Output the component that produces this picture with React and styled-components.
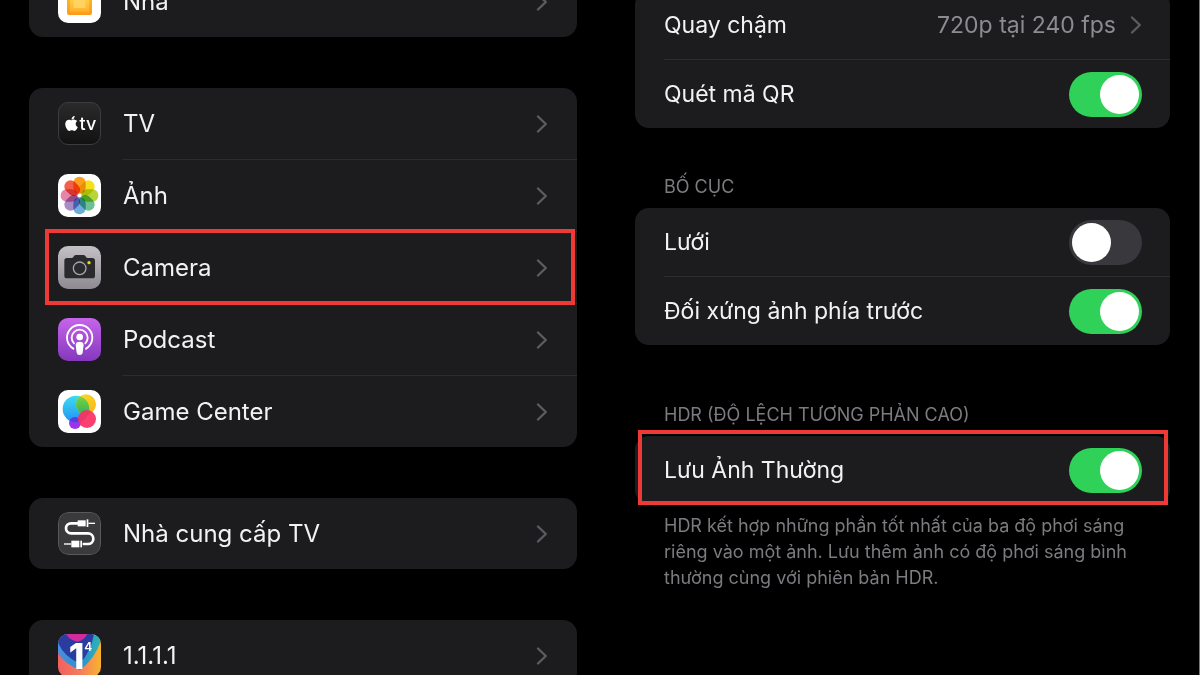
import React, { useState } from "react";
import styled, { createGlobalStyle, css } from "styled-components";
import { FaApple } from "react-icons/fa";

const GlobalStyle = createGlobalStyle`
  * {
    box-sizing: border-box;
  }
  body {
    margin: 0;
    background: #000;
    color: #f2f2f4;
    font-family: Inter, "Noto Sans", sans-serif;
  }
`;

const Page = styled.main`
  display: grid;
  grid-template-columns: 1fr 1fr;
  height: 100vh;
  overflow: hidden;
`;

const Screen = styled.section`
  overflow: hidden;
  ${({ $side }) =>
    $side === "left"
      ? css`
          padding: 0 23px 0 29px;
        `
      : css`
          padding: 0 29px 0 35px;
          border-right: 1px solid #77777a;
        `}
`;

// the list is scrolled, so the first row is cut by the top of the screen
const Scrolled = styled.div`
  margin-top: ${({ $by }) => -$by}px;
`;

const Group = styled.ul`
  list-style: none;
  margin: 0;
  padding: 0;
  border-radius: 14px;
  background: #1c1c1f;
`;

const AppGroup = styled(Group)`
  margin-bottom: 51px;
`;

const Item = styled.li`
  position: relative;
  & + &::before {
    content: "";
    display: block;
    height: 1px;
    margin-left: ${({ $inset }) => $inset}px;
    background: #2d2d30;
  }
`;

const rowStyle = css`
  display: flex;
  align-items: center;
  color: inherit;
  line-height: 32px;
  text-decoration: none;
`;

const AppRow = styled.a`
  ${rowStyle}
  height: 71px;
  padding: 0 29px;
  gap: 22px;
  font-size: 24px;
`;

const settingStyle = css`
  ${rowStyle}
  height: 68px;
  padding: 0 28px 0 29px;
  gap: 14px;
  font-size: 23px;
`;

const SettingLink = styled.a`
  ${settingStyle}
`;

const SettingLabel = styled.label`
  ${settingStyle}
`;

const Name = styled.span`
  flex: 1;
`;

const Value = styled.span`
  color: #8b8b90;
`;

const Highlight = styled.span`
  position: absolute;
  z-index: 1;
  inset: ${({ $inset }) => $inset};
  border: 4px solid #ee3a37;
  pointer-events: none;
`;

const Switch = styled.input`
  appearance: none;
  display: flex;
  align-items: center;
  width: 73px;
  height: 45px;
  margin: 0;
  padding: 0 3px;
  border-radius: 23px;
  background: #39393d;
  &::before {
    content: "";
    width: 39px;
    height: 39px;
    border-radius: 50%;
    background: #fff;
  }
  &:checked {
    justify-content: flex-end;
    background: #30d158;
  }
`;

const SectionTitle = styled.h2`
  margin: 0;
  padding: ${({ $top }) => $top}px 29px 9px;
  color: #7b7b80;
  font-size: 18px;
  font-weight: 400;
  line-height: 24px;
  text-transform: uppercase;
`;

const Note = styled.p`
  margin: 0;
  padding: 9px 29px;
  color: #7b7b80;
  font-size: 18px;
  line-height: 26px;
`;

const Tile = styled.svg`
  display: block;
  flex: none;
  width: 43px;
  height: 43px;
  border-radius: 10px;
`;

const TvTile = styled.span`
  display: flex;
  flex: none;
  align-items: center;
  justify-content: center;
  width: 43px;
  height: 43px;
  border: 1px solid #3c3c3e;
  border-radius: 10px;
  background: linear-gradient(#2a2a2b, #121213);
  color: #fff;
  font-size: 18px;
  font-weight: 500;
  line-height: 20px;
`;

const ChevronIcon = styled.svg`
  flex: none;
  width: 12px;
  height: 20px;
`;

const Chevron = () => (
  <ChevronIcon viewBox="0 0 12 20" fill="none" aria-hidden="true">
    <path
      d="M2 2.5 9.8 10 2 17.5"
      stroke="#5c5c60"
      strokeWidth="2.4"
      strokeLinecap="round"
      strokeLinejoin="round"
    />
  </ChevronIcon>
);

const HomeIcon = () => (
  <Tile viewBox="0 0 129 129" aria-hidden="true">
    <defs>
      <linearGradient id="home" x1="0" y1="0" x2="0" y2="1">
        <stop offset="0" stopColor="#ffc933" />
        <stop offset="1" stopColor="#fd9a1c" />
      </linearGradient>
      <linearGradient id="homeInner" x1="0" y1="0" x2="0" y2="1">
        <stop offset="0" stopColor="#ffd04a" />
        <stop offset="1" stopColor="#ffb12b" />
      </linearGradient>
    </defs>
    <rect width="129" height="129" fill="#fff" />
    <path
      d="M64 18 110 60H102V99Q102 105 96 105H33Q27 105 27 99V60H18Z"
      fill="url(#home)"
    />
    <path d="M36 54H93V95H36Z" fill="url(#homeInner)" />
    <path d="M47 54H82V84H47Z" fill="#ffd461" />
  </Tile>
);

const TvIcon = () => (
  <TvTile aria-hidden="true">
    <FaApple size={17} />
    tv
  </TvTile>
);

const PETALS = [
  "#f9a11e",
  "#f2e01c",
  "#b4d63a",
  "#6cc093",
  "#6cadde",
  "#a98bc8",
  "#e287ab",
  "#f2604c",
];

const PhotosIcon = () => (
  <Tile viewBox="0 0 129 129" aria-hidden="true">
    <rect width="129" height="129" fill="#fff" />
    {PETALS.map((color, i) => (
      <rect
        key={color}
        x="46"
        y="8"
        width="37"
        height="51"
        rx="18"
        fill={color}
        transform={`rotate(${i * 45} 64.5 64.5)`}
        style={{ mixBlendMode: "multiply" }}
      />
    ))}
  </Tile>
);

const CameraIcon = () => (
  <Tile viewBox="0 0 129 129" aria-hidden="true">
    <defs>
      <linearGradient id="camera" x1="0" y1="0" x2="0" y2="1">
        <stop offset="0" stopColor="#c3c1c6" />
        <stop offset="1" stopColor="#8d8b91" />
      </linearGradient>
    </defs>
    <rect width="129" height="129" fill="url(#camera)" />
    <path
      d="M27 36H41Q44 36 46 33L48 30Q50 27 54 27H76Q80 27 82 30L84 33Q86 36 89 36H103Q111 36 111 44V89Q111 97 103 97H27Q19 97 19 89V44Q19 36 27 36Z"
      fill="#2a2a2c"
    />
    <circle cx="65" cy="67" r="19" fill="none" stroke="#a5a4a8" strokeWidth="4" />
    <circle cx="93" cy="50" r="5" fill="#f5d21c" />
  </Tile>
);

const PodcastIcon = () => (
  <Tile viewBox="0 0 129 129" aria-hidden="true">
    <defs>
      <linearGradient id="podcast" x1="0" y1="0" x2="0" y2="1">
        <stop offset="0" stopColor="#c565ea" />
        <stop offset="1" stopColor="#8538bd" />
      </linearGradient>
    </defs>
    <rect width="129" height="129" fill="url(#podcast)" />
    <g fill="none" stroke="#fff" strokeWidth="5.5" strokeLinecap="round">
      <path d="M46 92A38 38 0 1 1 84 92" />
      <path d="M48 76A24 24 0 1 1 82 76" />
    </g>
    <circle cx="65" cy="57" r="10" fill="#fff" />
    <path
      d="M65 71Q77 71 77 81L74 104Q73 111 65 111Q57 111 56 104L53 81Q53 71 65 71Z"
      fill="#fff"
    />
  </Tile>
);

const GameCenterIcon = () => (
  <Tile viewBox="0 0 129 129" aria-hidden="true">
    <defs>
      <linearGradient id="gcBlue" x1="0" y1="0" x2="0" y2="1">
        <stop offset="0" stopColor="#3ddcf0" />
        <stop offset="1" stopColor="#2391f5" />
      </linearGradient>
      <linearGradient id="gcYellow" x1="0" y1="0" x2="1" y2="1">
        <stop offset="0" stopColor="#f7e02b" />
        <stop offset="1" stopColor="#fbb318" />
      </linearGradient>
      <linearGradient id="gcGreen" x1="0" y1="0" x2="0" y2="1">
        <stop offset="0" stopColor="#84d83c" />
        <stop offset="1" stopColor="#2fb35c" />
      </linearGradient>
      <clipPath id="gcClip">
        <circle cx="54" cy="57" r="40" />
      </clipPath>
    </defs>
    <rect width="129" height="129" fill="#fff" />
    <circle cx="51" cy="99" r="18" fill="#a032ee" />
    <circle cx="54" cy="57" r="40" fill="url(#gcBlue)" />
    <circle cx="84" cy="43" r="30" fill="url(#gcYellow)" />
    <circle cx="84" cy="43" r="30" fill="url(#gcGreen)" clipPath="url(#gcClip)" />
    <circle cx="51" cy="99" r="18" fill="#5b3be8" clipPath="url(#gcClip)" />
    <circle cx="87" cy="87" r="27" fill="#fb2f63" opacity="0.92" />
  </Tile>
);

const ProviderIcon = () => (
  <Tile viewBox="0 0 129 129" aria-hidden="true">
    <rect
      x="1.5"
      y="1.5"
      width="126"
      height="126"
      rx="29"
      fill="#3a3a3c"
      stroke="#59595b"
      strokeWidth="3"
    />
    <path
      d="M60 34H39A15 15 0 0 0 39 64H90A16 16 0 0 1 90 96H74"
      fill="none"
      stroke="#fff"
      strokeWidth="8"
    />
    <g fill="#fff">
      <rect x="59" y="25" width="24" height="18" />
      <rect x="86" y="22" width="5" height="23" />
      <rect x="91" y="32" width="20" height="4" />
      <rect x="40" y="86" width="24" height="20" />
      <rect x="67" y="86" width="5" height="20" />
      <rect x="18" y="94" width="22" height="4" />
    </g>
  </Tile>
);

const DnsIcon = () => (
  <Tile viewBox="0 0 129 129" aria-hidden="true">
    <defs>
      <linearGradient id="dnsWarm" x1="0" y1="0" x2="1" y2="0">
        <stop offset="0" stopColor="#f2605f" />
        <stop offset="0.5" stopColor="#f47a62" />
        <stop offset="1" stopColor="#f8b32c" />
      </linearGradient>
      <linearGradient id="dnsSky" x1="0" y1="0" x2="1" y2="0">
        <stop offset="0" stopColor="#4b8fe0" />
        <stop offset="0.5" stopColor="#2a8fd0" />
        <stop offset="1" stopColor="#2cb5b4" />
      </linearGradient>
    </defs>
    <rect width="129" height="129" fill="url(#dnsWarm)" />
    <path d="M0 0H129V20Q110 75 66 108Q20 90 0 58Z" fill="url(#dnsSky)" />
    <path d="M0 0H108Q98 55 66 88Q20 70 0 26Z" fill="#2a3c9f" />
    <path d="M24 0H88Q78 20 58 23Q34 18 24 0Z" fill="#d02c9b" />
    <text
      x="32"
      y="105"
      fill="#fff"
      fontFamily="Inter, sans-serif"
      fontWeight="800"
      fontSize="106"
    >
      1
      <tspan x="79" y="52" fontSize="36" fontWeight="600">
        4
      </tspan>
    </text>
  </Tile>
);

const MEDIA_APPS = [
  { name: "TV", Icon: TvIcon },
  { name: "Ảnh", Icon: PhotosIcon },
  { name: "Camera", Icon: CameraIcon, marked: true },
  { name: "Podcast", Icon: PodcastIcon },
  { name: "Game Center", Icon: GameCenterIcon },
];

const AppList = ({ apps }) => (
  <AppGroup>
    {apps.map(({ name, Icon, marked }) => (
      <Item key={name} $inset={94}>
        <AppRow href="#">
          <Icon />
          <Name>{name}</Name>
          <Chevron />
        </AppRow>
        {marked && <Highlight $inset="-2px 2px -2px 16px" />}
      </Item>
    ))}
  </AppGroup>
);

const Toggle = ({ name, on, marked }) => {
  const [checked, setChecked] = useState(on);
  return (
    <Item $inset={29}>
      <SettingLabel>
        <Name>{name}</Name>
        <Switch
          type="checkbox"
          role="switch"
          checked={checked}
          onChange={() => setChecked(!checked)}
        />
      </SettingLabel>
      {marked && <Highlight $inset="-6px 2px -1px 3px" />}
    </Item>
  );
};

const App = () => (
  <>
    <GlobalStyle />
    <Page>
      <Screen $side="left">
        <Scrolled $by={34}>
          <AppList apps={[{ name: "Nhà", Icon: HomeIcon }]} />
          <AppList apps={MEDIA_APPS} />
          <AppList apps={[{ name: "Nhà cung cấp TV", Icon: ProviderIcon }]} />
          <AppList apps={[{ name: "1.1.1.1", Icon: DnsIcon }]} />
        </Scrolled>
      </Screen>
      <Screen $side="right">
        <Scrolled $by={9}>
          <Group>
            <Item $inset={29}>
              <SettingLink href="#">
                <Name>Quay chậm</Name>
                <Value>720p tại 240 fps</Value>
                <Chevron />
              </SettingLink>
            </Item>
            <Toggle name="Quét mã QR" on />
          </Group>
          <SectionTitle $top={47}>Bố cục</SectionTitle>
          <Group>
            <Toggle name="Lưới" on={false} />
            <Toggle name="Đối xứng ảnh phía trước" on />
          </Group>
          <SectionTitle $top={58}>HDR (Độ lệch tương phản cao)</SectionTitle>
          <Group>
            <Toggle name="Lưu Ảnh Thường" on marked />
          </Group>
          <Note>
            HDR kết hợp những phần tốt nhất của ba độ phơi sáng riêng vào một
            ảnh. Lưu thêm ảnh có độ phơi sáng bình thường cùng với phiên bản
            HDR.
          </Note>
        </Scrolled>
      </Screen>
    </Page>
  </>
);

export default App;
